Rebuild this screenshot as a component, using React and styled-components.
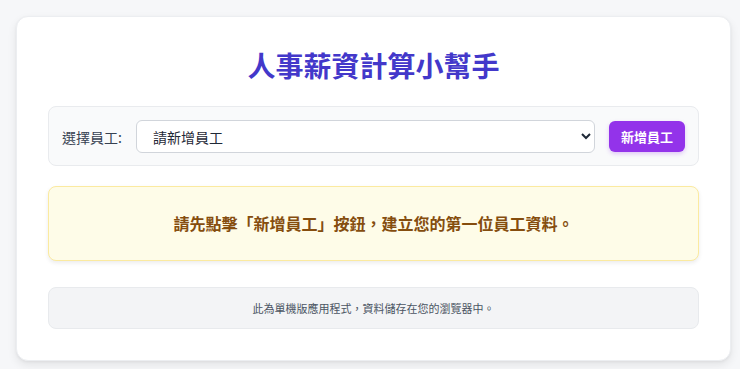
import React, { useState } from "react";
import styled, { createGlobalStyle } from "styled-components";

const GlobalStyle = createGlobalStyle`
  html, body {
    margin: 0;
    padding: 0;
    background: #f6f7f9;
    font-family: "Noto Sans CJK TC", "Noto Sans", sans-serif;
  }
  * { box-sizing: border-box; }
`;

const Page = styled.div`
  padding: 16px 9px 9px 16px;
`;

const Card = styled.div`
  width: 715px;
  background: #ffffff;
  border-radius: 12px;
  border: 1px solid #eceef1;
  box-shadow: 0 4px 10px rgba(0, 0, 0, 0.08), 0 1px 3px rgba(0, 0, 0, 0.05);
  padding: 31px;
`;

const Title = styled.h1`
  margin: 0 0 24px;
  text-align: center;
  font-size: 28px;
  line-height: 34px;
  font-weight: 700;
  color: #4338ca;
`;

const SelectPanel = styled.div`
  display: flex;
  align-items: center;
  gap: 14px;
  padding: 13px 13px 12px;
  background: #f9fafb;
  border: 1px solid #e9ebee;
  border-radius: 8px;
`;

const Label = styled.label`
  font-size: 14px;
  color: #374151;
  white-space: nowrap;
`;

const Select = styled.select`
  flex: 1;
  height: 33px;
  padding: 0 10px 0 12px;
  font-family: inherit;
  font-size: 14px;
  color: #1f2937;
  background: #ffffff;
  border: 1px solid #d1d5db;
  border-radius: 6px;
`;

const AddButton = styled.button`
  height: 31px;
  padding: 0 12px;
  font-family: inherit;
  font-size: 13px;
  font-weight: 700;
  color: #ffffff;
  background: #9333ea;
  border: none;
  border-radius: 6px;
  box-shadow: 0 2px 4px rgba(147, 51, 234, 0.25);
  cursor: pointer;
`;

const Notice = styled.div`
  margin-top: 20px;
  padding: 24px;
  text-align: center;
  font-size: 16px;
  line-height: 25px;
  font-weight: 700;
  color: #854d0e;
  background: #fefce8;
  border: 1px solid #fbeaa0;
  border-radius: 8px;
  box-shadow: 0 2px 4px rgba(0, 0, 0, 0.08);
`;

const Footer = styled.div`
  margin-top: 26px;
  padding: 12px;
  text-align: center;
  font-size: 11px;
  line-height: 16px;
  color: #4b5563;
  background: #f3f4f6;
  border: 1px solid #e8eaed;
  border-radius: 8px;
`;

export default function App() {
  const [employee, setEmployee] = useState("");

  return (
    <>
      <GlobalStyle />
      <Page>
        <Card>
          <Title>人事薪資計算小幫手</Title>
          <SelectPanel>
            <Label htmlFor="employee">選擇員工:</Label>
            <Select id="employee" value={employee} onChange={(e) => setEmployee(e.target.value)}>
              <option value="">請新增員工</option>
            </Select>
            <AddButton type="button">新增員工</AddButton>
          </SelectPanel>
          <Notice>請先點擊「新增員工」按鈕，建立您的第一位員工資料。</Notice>
          <Footer>此為單機版應用程式，資料儲存在您的瀏覽器中。</Footer>
        </Card>
      </Page>
    </>
  );
}
